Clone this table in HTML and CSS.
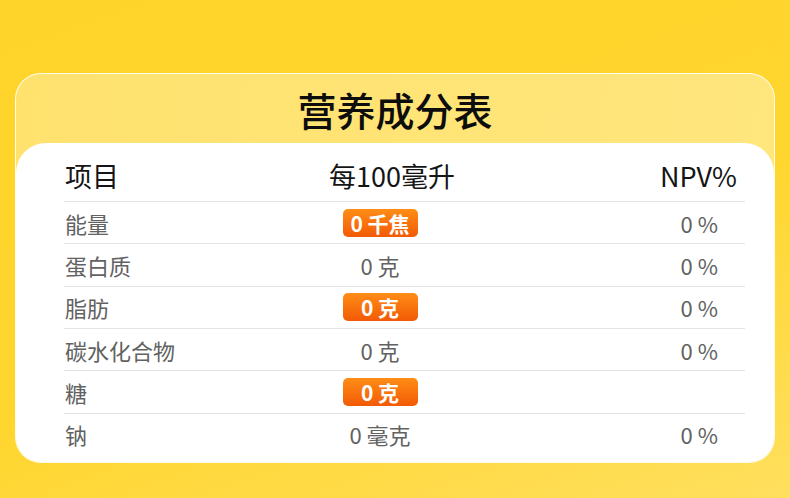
FILE: index.html
```html
<!DOCTYPE html>
<html lang="zh-CN">
<head>
<meta charset="utf-8">
<title>营养成分表</title>
<link rel="stylesheet" href="styles.css">
</head>
<body class="page">
  <div class="card">
    <h1 class="title">营养成分表</h1>
    <div class="panel">
      <div class="row head">
        <div class="c1">项目</div>
        <div class="c2">每100毫升</div>
        <div class="c3">NPV%</div>
      </div>
      <div class="row">
        <div class="c1">能量</div>
        <div class="c2"><span class="badge">0 千焦</span></div>
        <div class="c3">0 %</div>
      </div>
      <div class="row">
        <div class="c1">蛋白质</div>
        <div class="c2">0 克</div>
        <div class="c3">0 %</div>
      </div>
      <div class="row">
        <div class="c1">脂肪</div>
        <div class="c2"><span class="badge">0 克</span></div>
        <div class="c3">0 %</div>
      </div>
      <div class="row">
        <div class="c1">碳水化合物</div>
        <div class="c2">0 克</div>
        <div class="c3">0 %</div>
      </div>
      <div class="row">
        <div class="c1">糖</div>
        <div class="c2"><span class="badge">0 克</span></div>
        <div class="c3"></div>
      </div>
      <div class="row">
        <div class="c1">钠</div>
        <div class="c2">0 毫克</div>
        <div class="c3">0 %</div>
      </div>
    </div>
  </div>
</body>
</html>
```
FILE: styles.css
```css
* { box-sizing: border-box; }
html, body { margin: 0; padding: 0; }
.page {
  width: 790px;
  height: 498px;
  overflow: hidden;
  padding-top: 73px;
  background: linear-gradient(160deg, #ffd42a 0%, #ffd62e 55%, #ffdf5e 100%);
  font-family: "Noto Sans CJK SC", "Noto Sans", sans-serif;
}
.card {
  margin: 0 15px;
  width: 760px;
  height: 390px;
  border: 1px solid rgba(255,255,255,0.85);
  border-radius: 26px;
  overflow: hidden;
  display: flex;
  flex-direction: column;
  background: linear-gradient(100deg, #ffe26e 0%, #ffe67e 100%);
}
.title {
  margin: 0;
  height: 69px;
  display: flex;
  align-items: center;
  justify-content: center;
  padding: 0;
  font-size: 39px;
  font-weight: 500;
  color: #0d0d0d;
  letter-spacing: 0;
}
.panel {
  flex: 1;
  background: #fff;
  border-radius: 30px 30px 0 0;
  padding: 0 29px 0 48px;
}
.row {
  display: grid;
  grid-template-columns: 236px 160px 285px;
  height: 42.33px;
  border-top: 1px solid #e3e3e3;
  align-items: center;
  padding-top: 0;
  font-size: 22px;
  color: #626262;
}
.row.head {
  border-top: none;
  height: 58px;
  padding-top: 6px;
  font-size: 27px;
  color: #151515;
}
.c1 { padding-left: 1px; }
.c2 { text-align: center; display: flex; justify-content: center; }
.c3 { text-align: right; padding-right: 27px; }
.head .c2 { padding-left: 24px; }
.head .c3 { padding-right: 8px; }
.badge {
  display: flex;
  align-items: center;
  justify-content: center;
  width: 75px;
  height: 28px;
  border-radius: 5px;
  background: linear-gradient(180deg, #ff8d16 0%, #f25a06 100%);
  color: #fff;
  font-weight: 700;
  font-size: 21px;
}
```
